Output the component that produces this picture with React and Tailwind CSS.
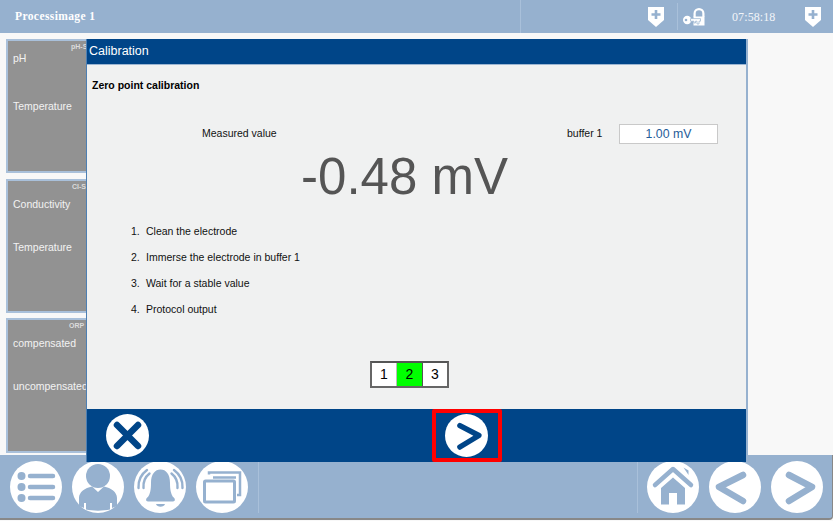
const BAR = "#96b1cf";
const NAVY = "#004588";

function Shield({ className }) {
  return (
    <svg className={className} width="16" height="20" viewBox="0 0 16 20">
      <path d="M0 0H16V13L8 20L0 13Z" fill="#fff" />
      <path d="M8 3V12M3.5 7.5H12.5" stroke={BAR} strokeWidth="2.6" />
    </svg>
  );
}

function KeyLock() {
  return (
    <svg width="22" height="18" viewBox="0 0 22 18">
      <path d="M10.5 9V5.5a5.5 5.5 0 0 1 11 0V9h-2.2V5.5a3.3 3.3 0 0 0-6.6 0V9z" fill="#fff" />
      <path d="M10.5 8.5H21.5V17.5H10.5z" fill="#fff" />
      <circle cx="4.2" cy="12" r="4.2" fill="#fff" />
      <circle cx="3" cy="12" r="1.3" fill={BAR} />
      <path d="M7.5 10.6H17.5V13.2H16V16H14V13.2H12.5V15H11V13.2H7.5z" fill="#fff" stroke={BAR} strokeWidth="0.7" />
    </svg>
  );
}

function RoundBtn({ children, size = 52 }) {
  return (
    <svg width={size} height={size} viewBox="0 0 52 52" className="shrink-0">
      <circle cx="26" cy="26" r="26" fill="#fff" />
      {children}
    </svg>
  );
}

function ListIcon() {
  return (
    <RoundBtn>
      <g fill={BAR}>
        <circle cx="11.5" cy="15" r="4" />
        <circle cx="11.5" cy="26" r="4" />
        <circle cx="11.5" cy="37" r="4" />
      </g>
      <path d="M20 15H43M20 26H43M20 37H43" stroke={BAR} strokeWidth="4.5" strokeLinecap="round" />
    </RoundBtn>
  );
}

function UserIcon() {
  return (
    <RoundBtn>
      <circle cx="26" cy="15" r="12" fill={BAR} />
      <path d="M7 45V37C7 31 13 27 20 25.5L26 31L32 25.5C39 27 45 31 45 37V45L40 47V42H38V48.5C31 50 21 50 14 48.5V42H12V47Z" fill={BAR} />
    </RoundBtn>
  );
}

function BellIcon() {
  return (
    <RoundBtn>
      <path d="M14 36C16 33 17 29 17 22C17 13 21 8.5 26.5 8.5C32 8.5 36 13 36 22C36 29 37 33 39 36C41.5 37.5 41.5 40.5 39 40.5H14C11.5 40.5 11.5 37.5 14 36Z" fill={BAR} />
      <path d="M22 43H31C30 46.5 23 46.5 22 43Z" fill={BAR} />
      <path d="M9.5 27C9 21 11 16 15.5 12.5M4.5 27C4 19 7.5 13 13 9M43.5 27C44 21 42 16 37.5 12.5M48.5 27C49 19 45.5 13 40 9" stroke={BAR} strokeWidth="2.4" fill="none" strokeLinecap="round" />
    </RoundBtn>
  );
}

function WindowsIcon() {
  return (
    <RoundBtn>
      <path d="M13 13.5V11.5H44V34H41" stroke={BAR} strokeWidth="2.5" fill="none" />
      <path d="M17 16.5H40" stroke={BAR} strokeWidth="2.5" />
      <rect x="8.5" y="20" width="30" height="21" fill="none" stroke={BAR} strokeWidth="3" rx="1" />
    </RoundBtn>
  );
}

function HomeIcon() {
  return (
    <RoundBtn>
      <path d="M8 24L26 8L44 24" stroke={BAR} strokeWidth="4.5" fill="none" strokeLinecap="round" strokeLinejoin="round" />
      <path d="M36.5 6.5L41.5 9.5V14Z" fill={BAR} />
      <path d="M14 27L26 16.5L38 27V43.5H30V32H22V43.5H14Z" fill={BAR} />
    </RoundBtn>
  );
}

function Chevron({ dir, color = BAR, size = 52 }) {
  const d = dir === "left" ? "M34 14L10 26L34 40" : "M18 14L41 26L18 40";
  return (
    <RoundBtn size={size}>
      <path d={d} stroke={color} strokeWidth="6.5" fill="none" strokeLinecap="round" strokeLinejoin="round" />
    </RoundBtn>
  );
}

function Card({ tag, tagPos, first, second, firstTop, gap, className }) {
  return (
    <div className={`w-[90px] shrink-0 bg-[#929292] border-2 border-[#a9c0da] relative pl-[5px] text-[10.5px] leading-[13px] text-[#f2f2f2] overflow-hidden ${className}`}>
      <div className={`absolute top-[1px] text-[7px] leading-[9px] font-bold text-[#dcdcdc] whitespace-nowrap ${tagPos}`}>{tag}</div>
      <div className={firstTop}>{first}</div>
      <div className={gap}>{second}</div>
    </div>
  );
}

export default function App() {
  const steps = ["Clean the electrode", "Immerse the electrode in buffer 1", "Wait for a stable value", "Protocol output"];

  return (
    <div className="relative w-[833px] h-[521px] overflow-hidden bg-[#f8f8f8] font-['Liberation_Sans',Arial,sans-serif] flex flex-col">
      {/* top bar */}
      <header className="h-[33px] shrink-0 bg-[#96b1cf] flex items-center text-white font-['Liberation_Serif',serif]">
        <div className="pl-[15px] w-[520px] text-[11.5px] font-bold tracking-[0.4px]">Processimage 1</div>
        <div className="flex-1 h-full flex items-center border-l border-[#a9c0da]">
          <Shield className="ml-[127px]" />
          <div className="ml-[13px] h-[27px] border-l border-[#a9c0da]" />
          <div className="ml-[5px]"><KeyLock /></div>
          <div className="ml-[27px] w-[46px] text-[12px] tracking-[0.1px] text-[#f2f5f9]">07:58:18</div>
          <Shield className="ml-[27px]" />
        </div>
      </header>

      {/* cards on the left, dialog sits over them */}
      <main className="flex-1 flex flex-col pl-[6px] pt-[6px]">
        <Card tag="pH-S" tagPos="left-[63px]" first="pH" second="Temperature" firstTop="mt-[11px]" gap="mt-[35px]" className="h-[134px] mb-[6px]" />
        <Card tag="Cl-Se" tagPos="left-[64px]" first="Conductivity" second="Temperature" firstTop="mt-[17px]" gap="mt-[30px]" className="h-[134px] mb-[5px]" />
        <Card tag="ORP I" tagPos="left-[61px]" first="compensated" second="uncompensated" firstTop="mt-[17px]" gap="mt-[30px]" className="h-[135px]" />
      </main>

      {/* bottom bar */}
      <footer className="h-[65px] mb-[1px] shrink-0 bg-[#96b1cf] flex items-center pl-[10px] border-b-2 border-r border-[#888] rounded-br-[4px]">
        <div className="flex items-center gap-[10px]">
          <ListIcon />
          <UserIcon />
          <BellIcon />
          <WindowsIcon />
        </div>
        <div className="ml-[10px] h-[52px] border-l border-[#a9c0da]" />
        <div className="ml-auto h-[52px] border-l border-[#a9c0da] flex items-center gap-[10px] pl-[9px] pr-[9px]">
          <HomeIcon />
          <Chevron dir="left" />
          <Chevron dir="right" />
        </div>
      </footer>

      {/* calibration dialog */}
      <div className="absolute left-[86px] top-[39px] w-[662px] h-[423px] flex flex-col border-r-[2px] border-r-[#96b1cf] border-l border-l-[#4d7fb3]">
        <div className="h-[25px] bg-[#004588] text-white text-[12.5px] flex items-center pl-[2px] shrink-0">Calibration</div>
        <div className="flex-1 bg-[#f0f1f1] border-t border-[#9db6d2] text-[10.5px] text-[#111] flex flex-col">
          <div className="pl-[5px] pt-[14px] text-[10.5px] leading-[13px] font-bold text-black">Zero point calibration</div>
          <div className="mt-[32px] flex items-center h-[20px]">
            <span className="ml-[115px] w-[365px]">Measured value</span>
            <span className="w-[52px]">buffer 1</span>
            <div className="w-[99px] h-[20px] bg-white border border-[#c9c9c9] text-[#1f5c99] text-[12.3px] flex items-center justify-center">1.00 mV</div>
          </div>
          <div className="text-center text-[51px] leading-[56px] text-[#555] mt-[5px] mr-[24px]">-0.48 mV</div>
          <ol className="mt-[20px] pl-[44px] flex flex-col gap-[13px] leading-[13px]">
            {steps.map((s, i) => (
              <li key={s} className="flex">
                <span className="w-[15px]">{i + 1}.</span>
                <span>{s}</span>
              </li>
            ))}
          </ol>
          <div className="mt-[45px] self-start ml-[283px] flex h-[27px] border-2 border-[#666] border-t-[#555] text-[14px] text-black bg-white">
            <div className="w-[25px] flex items-center justify-center border-r border-[#bbb]">1</div>
            <div className="w-[26px] flex items-center justify-center bg-[#00ff00] border-r border-[#555]">2</div>
            <div className="w-[24px] flex items-center justify-center">3</div>
          </div>
        </div>
        <div className="h-[53px] bg-[#004588] shrink-0 flex items-center pl-[19px]">
          <svg width="43" height="43" viewBox="0 0 43 43" className="shrink-0">
            <circle cx="21.5" cy="21.5" r="21.5" fill="#fff" />
            <path d="M11 11L32 32M32 11L11 32" stroke={NAVY} strokeWidth="6.5" strokeLinecap="round" />
          </svg>
          <div className="ml-[283px] w-[70px] h-[53px] border-[4px] border-[#ff0000] rounded-[2px] flex items-center justify-center pr-[2px]">
            <Chevron dir="right" color={NAVY} size={43} />
          </div>
        </div>
      </div>
    </div>
  );
}
